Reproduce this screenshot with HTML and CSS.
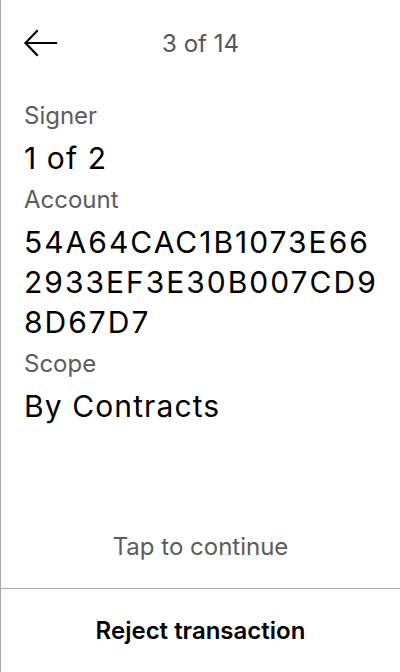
FILE: index.html
```html
<!DOCTYPE html>
<html>
<head>
<meta charset="utf-8">
<link rel="stylesheet" href="styles.css">
</head>
<body>
<div class="screen">
  <header class="header">
    <button class="back" aria-label="Back">
      <svg width="34" height="28" viewBox="0 0 34 28" fill="none" stroke="#000" stroke-width="2.2" stroke-linecap="square">
        <path d="M2 14 H32"/>
        <path d="M13 2 L1.5 14 L13 26"/>
      </svg>
    </button>
    <div class="title">3 of 14</div>
  </header>
  <main class="content">
    <div class="label">Signer</div>
    <div class="value">1 of 2</div>
    <div class="label">Account</div>
    <div class="value account">54A64CAC1B1073E66<br>2933EF3E30B007CD9<br>8D67D7</div>
    <div class="label">Scope</div>
    <div class="value">By Contracts</div>
  </main>
  <div class="hint">Tap to continue</div>
  <footer class="footer">Reject transaction</footer>
</div>
</body>
</html>
```
FILE: styles.css
```css
html, body {
  margin: 0;
  padding: 0;
  background: #fff;
}
body {
  font-family: Inter, "Noto Sans", sans-serif;
  color: #000;
}
.screen {
  width: 400px;
  height: 672px;
  box-sizing: border-box;
  border-left: 1px solid #a8a8a8;
  display: flex;
  flex-direction: column;
}
.header {
  height: 86px;
  display: flex;
  align-items: center;
  position: relative;
  padding-left: 23px;
}
.back {
  border: 0;
  background: none;
  padding: 0;
  display: flex;
  z-index: 1;
}
.title {
  position: absolute;
  left: 0;
  right: 0;
  text-align: center;
  font-size: 24px;
  color: #555;
}
.content {
  padding: 8px 10px 0 23px;
  flex: 1;
}
.label {
  font-size: 24px;
  line-height: 44px;
  color: #5c5c5c;
}
.value {
  font-size: 30px;
  letter-spacing: 1.1px;
  line-height: 40px;
  color: #000;
}
.account {
  letter-spacing: 2px;
}
.hint {
  text-align: center;
  font-size: 24px;
  color: #5c5c5c;
  padding-bottom: 27px;
}
.footer {
  border-top: 1px solid #a8a8a8;
  height: 83px;
  display: flex;
  align-items: center;
  justify-content: center;
  font-size: 24px;
  font-weight: 600;
}
```
